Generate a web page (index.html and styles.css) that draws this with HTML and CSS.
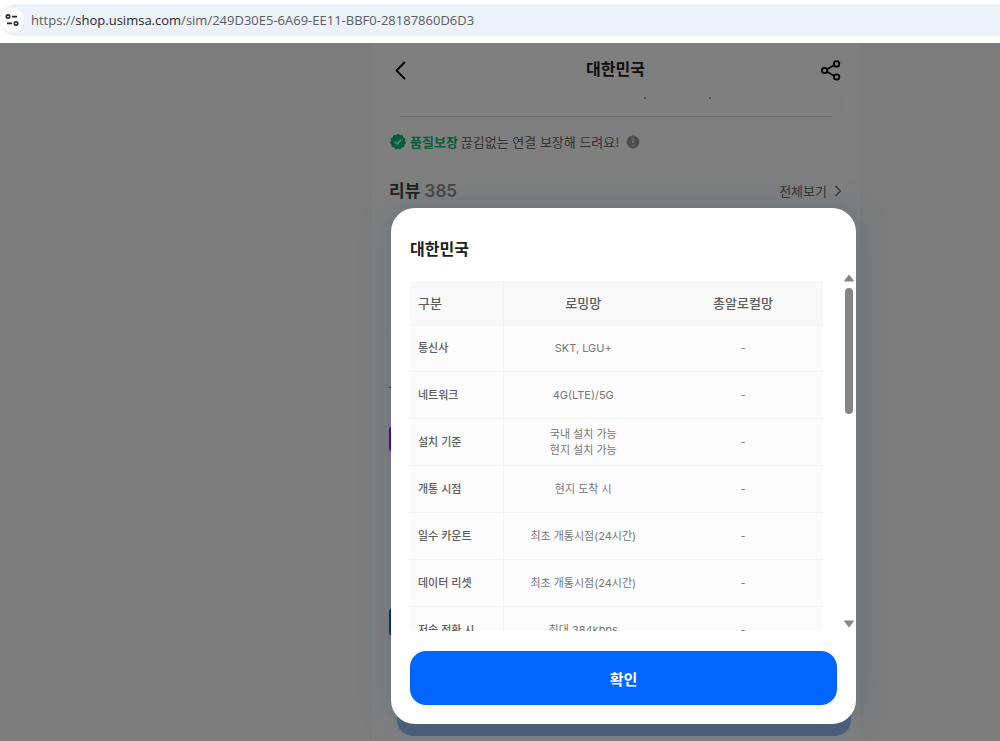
FILE: index.html
```
<!DOCTYPE html>
<html lang="ko">
  <head>
    <meta charset="utf-8" />
    <meta name="viewport" content="width=device-width, initial-scale=1" />
    <title>대한민국</title>
    <link rel="stylesheet" href="styles.css">
  </head>
  <body>
    <div class="address-bar">
      <div class="address-field">
        <button class="site-info" type="button" aria-label="Site information">
          <svg width="14" height="14" viewBox="0 0 14 14" fill="none" stroke="#222" stroke-width="1.6">
            <circle cx="3" cy="3.6" r="1.7" />
            <path d="M7 3.6h5M2 10.4h5" />
            <circle cx="11" cy="10.4" r="1.7" />
          </svg>
        </button>
        <span class="url">https://<b>shop.usimsa.com</b>/sim/249D30E5-6A69-EE11-BBF0-28187860D6D3</span>
      </div>
    </div>

    <div class="viewport">
      <div class="dim"></div>
      <main class="app">
        <header class="app-header">
          <button class="icon-button" type="button" aria-label="뒤로">
            <svg width="22" height="22" viewBox="0 0 22 22" fill="none" stroke="#000" stroke-width="1.8" stroke-linecap="round" stroke-linejoin="round">
              <path d="M15.500 3.500 7.500 11.500l8 8" />
            </svg>
          </button>
          <h1>대한민국</h1>
          <button class="icon-button" type="button" aria-label="공유">
            <svg width="22" height="22" viewBox="0 0 22 22" fill="none" stroke="#000" stroke-width="1.8">
              <path d="m7 10.300 7-4.100M7 12.700l7 4.100" />
              <circle cx="4.600" cy="11.500" r="2.700" />
              <circle cx="16.600" cy="4.900" r="2.700" />
              <circle cx="16.600" cy="18" r="2.700" />
            </svg>
          </button>
        </header>

        <div class="plan-card">
          <i class="dot"></i>
          <i class="dot"></i>
        </div>
        <hr class="divider" />

        <p class="quality">
          <svg width="18" height="18" viewBox="0 0 18 18">
            <path fill="#06bd78" d="M9 .8l2 1.300 2.400-.1.900 2.200 2.100 1.200-.4 2.400 1.200 2.100-1.700 1.700-.2 2.400-2.400.5-1.500 1.900L9 15.700l-2.400.7-1.500-1.900-2.400-.5-.2-2.400L.8 9.900 2 7.800l-.4-2.400 2.100-1.200L4.600 2 7 2.100z" />
            <path d="m5.800 8.800 2.300 2.200 4-4.200" fill="none" stroke="#fff" stroke-width="1.500" />
          </svg>
          <strong>품질보장</strong>
          <span>끊김없는 연결 보장해 드려요!</span>
          <svg class="notice" width="14" height="14" viewBox="0 0 14 14">
            <circle cx="7" cy="7" r="6.500" fill="#9c9c9c" />
            <path d="M7 3.300v4.600M7 9.400v1.500" stroke="#e8e8e8" stroke-width="1.500" />
          </svg>
        </p>

        <section class="review">
          <h2>리뷰 <span>385</span></h2>
          <a href="#all">전체보기
            <svg width="8" height="12" viewBox="0 0 8 12" fill="none" stroke="#666" stroke-width="1.300">
              <path d="m1.500 1 5 5-5 5" />
            </svg>
          </a>
        </section>
        <div class="tabs"></div>
        <div class="tab-body">
          <div class="tag"></div>
          <div class="chip"></div>
        </div>
        <div class="buy-bar">
          <div class="buy"></div>
        </div>
      </main>

      <div class="modal" role="dialog" aria-modal="true" aria-labelledby="modal-title">
        <h2 id="modal-title">대한민국</h2>
        <div class="scroll-row">
          <div class="scroller">
            <table>
              <thead>
                <tr><th>구분</th><th>로밍망</th><th>총알로컬망</th></tr>
              </thead>
              <tbody>
                <tr><th>통신사</th><td>SKT, LGU+</td><td>-</td></tr>
                <tr><th>네트워크</th><td>4G(LTE)/5G</td><td>-</td></tr>
                <tr><th>설치 기준</th><td>국내 설치 가능<br />현지 설치 가능</td><td>-</td></tr>
                <tr><th>개통 시점</th><td>현지 도착 시</td><td>-</td></tr>
                <tr><th>일수 카운트</th><td>최초 개통시점(24시간)</td><td>-</td></tr>
                <tr><th>데이터 리셋</th><td>최초 개통시점(24시간)</td><td>-</td></tr>
                <tr><th>저속 전환 시</th><td>최대 384kbps</td><td>-</td></tr>
              </tbody>
            </table>
          </div>
          <div class="scrollbar">
            <svg width="10" height="8" viewBox="0 0 10 8"><path fill="#858585" d="M5 .5 9.700 6.500q.3 1-.7 1H1q-1 0-.7-1z" /></svg>
            <div class="track"><div class="thumb"></div></div>
            <svg width="10" height="8" viewBox="0 0 10 8"><path fill="#858585" d="M5 7.500 9.700 1.500q.3-1-.7-1H1q-1 0-.7 1z" /></svg>
          </div>
        </div>
        <button class="confirm" type="button">확인</button>
      </div>
    </div>
  </body>
</html>
```

FILE: styles.css
```
* {
  box-sizing: border-box;
}
body {
  margin: 0;
  height: 100vh;
  display: flex;
  flex-direction: column;
  overflow: hidden;
  color: #1c1c1c;
  font-family: Inter, "Noto Sans CJK KR", sans-serif;
}
h1,
h2,
p {
  margin: 0;
}
button {
  padding: 0;
  border: 0;
  background: none;
  font-family: inherit;
}

/* browser address bar */
.address-bar {
  flex: none;
  padding: 4px 0 7px;
  background: #fff;
}
.address-field {
  display: flex;
  align-items: center;
  gap: 7px;
  height: 32px;
  background: #edf1fa;
  border-radius: 16px 0 0 16px;
}
.site-info {
  display: flex;
  align-items: center;
  justify-content: center;
  width: 24px;
  height: 24px;
  border-radius: 50%;
  background: #fff;
}
.url {
  color: #5a5d61;
  font-family: "Open Sans", "Noto Sans", sans-serif;
  font-size: 13px;
  white-space: nowrap;
}
.url b {
  color: #26282b;
  font-weight: 400;
}

/* page behind the modal */
.viewport {
  position: relative;
  flex: 1;
  display: grid;
  grid-template-columns: minmax(0, 372fr) 488px minmax(0, 140fr);
  min-height: 0;
  background: #f8f8f8;
}
.dim {
  position: absolute;
  inset: 0;
  z-index: 1;
  background: rgba(0, 0, 0, 0.5);
}
.app {
  grid-column: 2;
  grid-row: 1;
  display: flex;
  flex-direction: column;
  min-height: 0;
  padding: 0 18px 0 17px;
  background: #fff;
}
.app-header {
  display: flex;
  align-items: center;
  justify-content: space-between;
  height: 54px;
}
.app-header h1 {
  font-size: 16px;
  font-weight: 600;
  line-height: 22px;
  padding-bottom: 2px;
}
.icon-button {
  height: 22px;
}
.plan-card {
  display: flex;
  gap: 63px;
  height: 16px;
  padding-left: 254px;
  border: solid #f8f8f8;
  border-width: 0 1px;
}
.dot {
  width: 2px;
  height: 2px;
  background: #aaa;
}
.divider {
  width: 432px;
  height: 1px;
  margin: 3px auto 0;
  border: 0;
  background: #e2e2e2;
}
.quality {
  display: flex;
  align-items: center;
  gap: 3px;
  height: 50px;
  color: #666;
  font-family: "Noto Sans CJK KR", sans-serif;
  font-size: 13px;
  line-height: 18px;
}
.quality strong {
  color: #06bd78;
  font-weight: 600;
}
.quality .notice {
  margin-left: 4px;
}
.review {
  display: flex;
  align-items: flex-start;
  justify-content: space-between;
  height: 158px;
  padding-top: 12px;
  line-height: 24px;
}
.review h2 {
  color: #444;
  font-size: 17px;
  font-weight: 600;
}
.review h2 span {
  color: #8d8d8d;
}
.review a {
  display: flex;
  align-items: center;
  gap: 7px;
  color: #666;
  font-size: 13px;
  text-decoration: none;
}
.tabs {
  height: 63px;
  border-top: 8px solid #f8f8f8;
  border-bottom: 1px solid #777;
}
.tag {
  width: 60px;
  height: 26px;
  margin-top: 38px;
  border-radius: 4px;
  background: #a000ff;
}
.chip {
  width: 60px;
  height: 28px;
  margin-top: 156px;
  border-radius: 4px;
  background: #0055dd;
}
.buy-bar {
  margin: auto -9px 5px 8px;
}
.buy {
  height: 54px;
  border-radius: 16px;
  background: #9abef8;
}

/* modal */
.modal {
  grid-column: 2;
  grid-row: 1;
  z-index: 2;
  align-self: end;
  margin: 0 4px 17px 19px;
  padding: 29px 0 19px 19px;
  border-radius: 24px;
  background: #fff;
  box-shadow: 0 0 32px rgba(60, 90, 120, 0.3);
}
.modal h2 {
  font-size: 16px;
  font-weight: 700;
  line-height: 24px;
}
.scroll-row {
  display: flex;
  justify-content: space-between;
  height: 358px;
  margin-top: 12px;
  padding-right: 2px;
}
.scroller {
  width: 413px;
  margin-top: 8px;
  overflow-y: auto;
  scrollbar-width: none;
}
table {
  width: 100%;
  border-collapse: collapse;
  table-layout: fixed;
  background: #fcfcfc;
}
tr {
  height: 47px;
  border-bottom: 1px solid #f4f4f4;
}
th,
td {
  padding: 0;
  color: #777;
  font-size: 11px;
  font-weight: 400;
  line-height: 16px;
  text-align: center;
}
th {
  color: #5c5c5c;
  font-weight: 500;
}
th:first-child {
  width: 93px;
  padding-left: 8px;
  border-right: 1px solid #f2f2f2;
  text-align: left;
}
thead tr {
  height: 44px;
  background: #f8f8f8;
}
tbody tr:first-child {
  height: 46px;
}
thead th {
  font-size: 13px;
}
.scrollbar {
  display: flex;
  flex-direction: column;
  align-items: center;
  width: 10px;
  padding: 1px 0 3px;
}
.track {
  flex: 1;
  padding-top: 6px;
}
.thumb {
  width: 8px;
  height: 126px;
  border-radius: 4px;
  background: #858585;
}
.confirm {
  display: block;
  width: calc(100% - 19px);
  height: 54px;
  margin-top: 20px;
  border-radius: 16px;
  background: #0066ff;
  color: #fff;
  font-size: 15px;
  font-weight: 700;
}
```
